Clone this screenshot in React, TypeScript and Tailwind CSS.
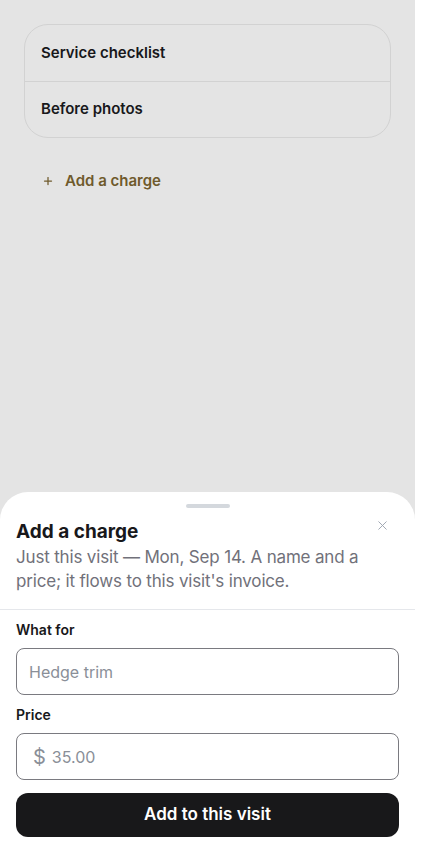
import { X, Plus } from "lucide-react";

const font = { fontFamily: "Inter, 'Noto Sans', sans-serif" };

export default function App() {
  return (
    <div className="flex h-[845px] w-full bg-white text-[#18181b]" style={font}>
      <div className="flex w-[415px] flex-col bg-[#e4e4e4]">
        {/* Page content behind the sheet */}
        <div className="mx-6 mt-6 rounded-3xl border border-[#d2d2d2]">
          <div className="flex h-14 items-center px-4 text-[15px] font-semibold">Service checklist</div>
          <div className="flex h-14 items-center border-t border-[#d2d2d2] px-4 text-[15px] font-semibold">
            Before photos
          </div>
        </div>
        <button className="mt-[30px] flex h-[26px] items-center gap-[11px] pl-[42px] text-[15px] font-semibold text-[#6f5a2c]">
          <Plus size={12} strokeWidth={2.5} />
          Add a charge
        </button>

        {/* Bottom sheet */}
        <div className="relative mt-auto rounded-t-[28px] bg-white pb-[8px] pt-3">
          <div className="mx-auto h-1 w-11 rounded-full bg-[#d4d8dd]" />
          <button className="absolute right-[25px] top-[26px] text-[#9ca3af]">
            <X size={15} strokeWidth={1.5} />
          </button>
          <div className="px-4 pb-4 pt-[11px]">
            <h2 className="text-[19px] font-bold leading-[26px]">Add a charge</h2>
            <p className="pr-6 text-[17px] leading-6 tracking-[-0.01em] text-[#71717a]">
              Just this visit — Mon, Sep 14. A name and a price; it flows to this visit's invoice.
            </p>
          </div>
          <div className="h-px bg-[#e5e7eb]" />
          <div className="px-4 pt-[10px]">
            <label className="block text-[14px] font-semibold leading-5">What for</label>
            <div className="mt-2 flex h-[47px] items-center rounded-lg border border-[#7a7a80] px-3 text-[16px] text-[#8a8f98]">
              Hedge trim
            </div>
            <label className="mt-[10px] block text-[14px] font-semibold leading-5">Price</label>
            <div className="mt-2 flex h-[47px] items-center gap-[6px] rounded-lg border border-[#7a7a80] px-4 text-[16px] text-[#8a8f98]">
              <span className="text-[20px]">$</span>
              <span>35.00</span>
            </div>
            <button className="mt-[13px] flex h-11 w-full items-center justify-center rounded-xl bg-[#18181a] text-[17px] font-semibold text-white">
              Add to this visit
            </button>
          </div>
        </div>
      </div>
    </div>
  );
}
